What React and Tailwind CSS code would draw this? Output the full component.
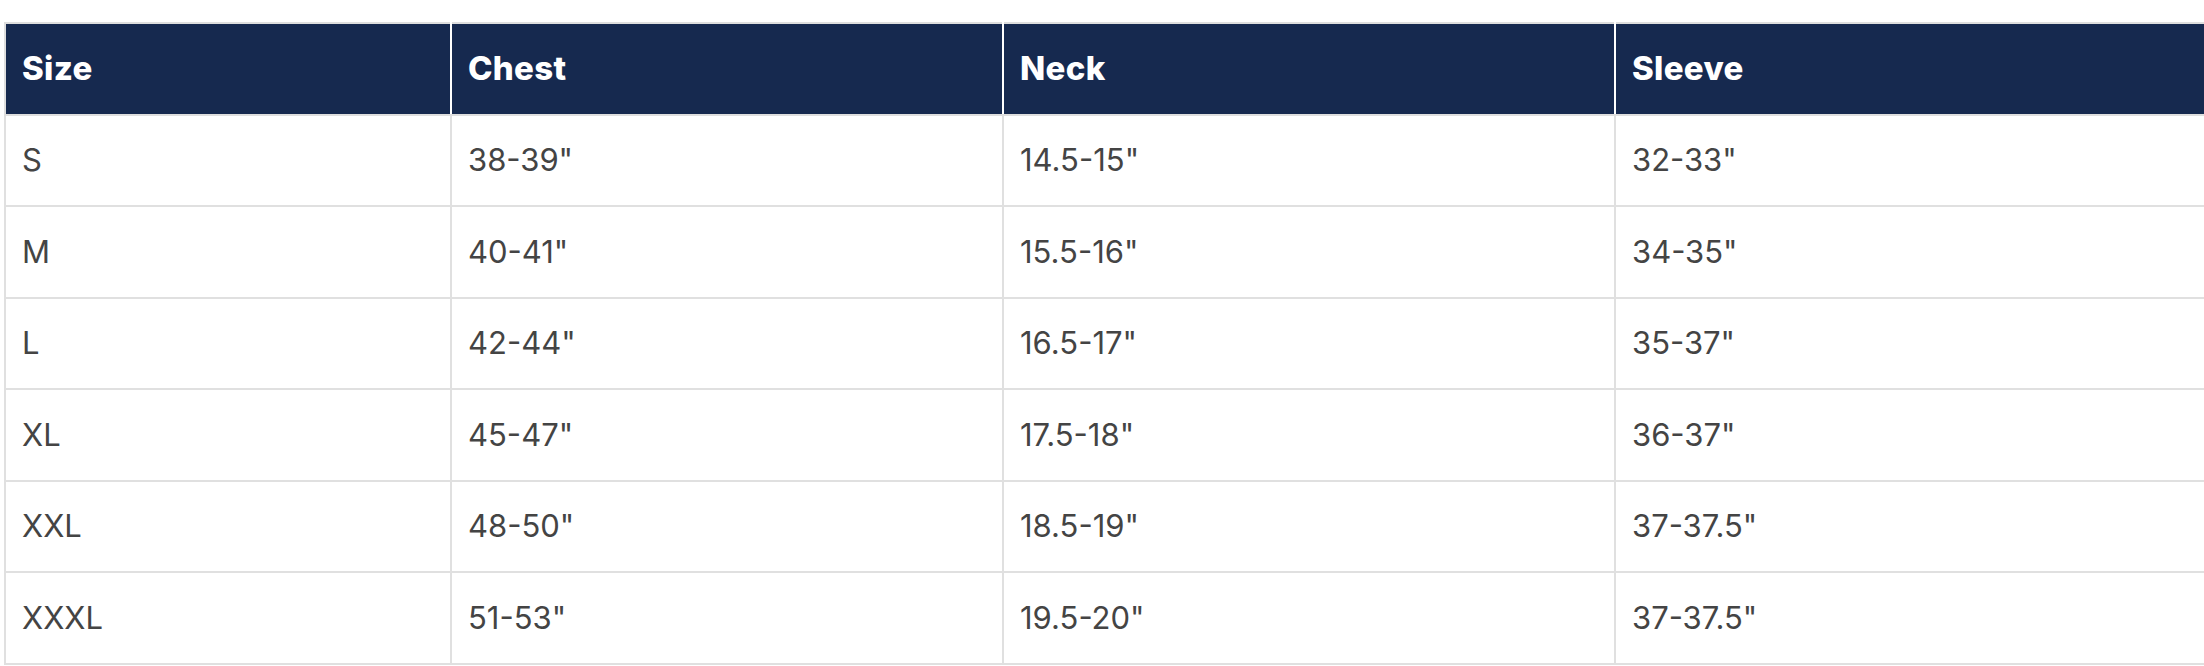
const rows = [
  ["S", '38-39"', '14.5-15"', '32-33"'],
  ["M", '40-41"', '15.5-16"', '34-35"'],
  ["L", '42-44"', '16.5-17"', '35-37"'],
  ["XL", '45-47"', '17.5-18"', '36-37"'],
  ["XXL", '48-50"', '18.5-19"', '37-37.5"'],
  ["XXXL", '51-53"', '19.5-20"', '37-37.5"'],
];

const headers = ["Size", "Chest", "Neck", "Sleeve"];

const SizeChart = () => {
  return (
    <div className="w-[2204px] h-[666px] overflow-hidden bg-white pt-[22px] pl-[4px]">
      <table className="w-[2230px] table-fixed border-collapse font-['Inter','Liberation_Sans',sans-serif]">
        <colgroup>
          <col className="w-[446px]" />
          <col className="w-[552px]" />
          <col className="w-[612px]" />
          <col />
        </colgroup>
        <thead>
          <tr className="bg-[#16294f]">
            {headers.map((h, i) => (
              <th
                key={h}
                className={`h-[91.5px] px-[16px] text-left align-middle text-[33px] font-extrabold tracking-[0.3px] text-white border-2 border-t-[#dedede] border-b-[#dedede] border-l-[#dedede] ${
                  i === 0 ? "" : "border-l-[#e8ecf2]"
                }`}
              >
                {h}
              </th>
            ))}
          </tr>
        </thead>
        <tbody>
          {rows.map((r) => (
            <tr key={r[0]}>
              {r.map((c, i) => (
                <td
                  key={i}
                  className="h-[91.6px] px-[16px] align-middle text-[31px] font-normal text-[#444444] border-2 border-[#e0e0e0]"
                >
                  {c}
                </td>
              ))}
            </tr>
          ))}
        </tbody>
      </table>
    </div>
  );
};

export default function App() {
  return <SizeChart />;
}
